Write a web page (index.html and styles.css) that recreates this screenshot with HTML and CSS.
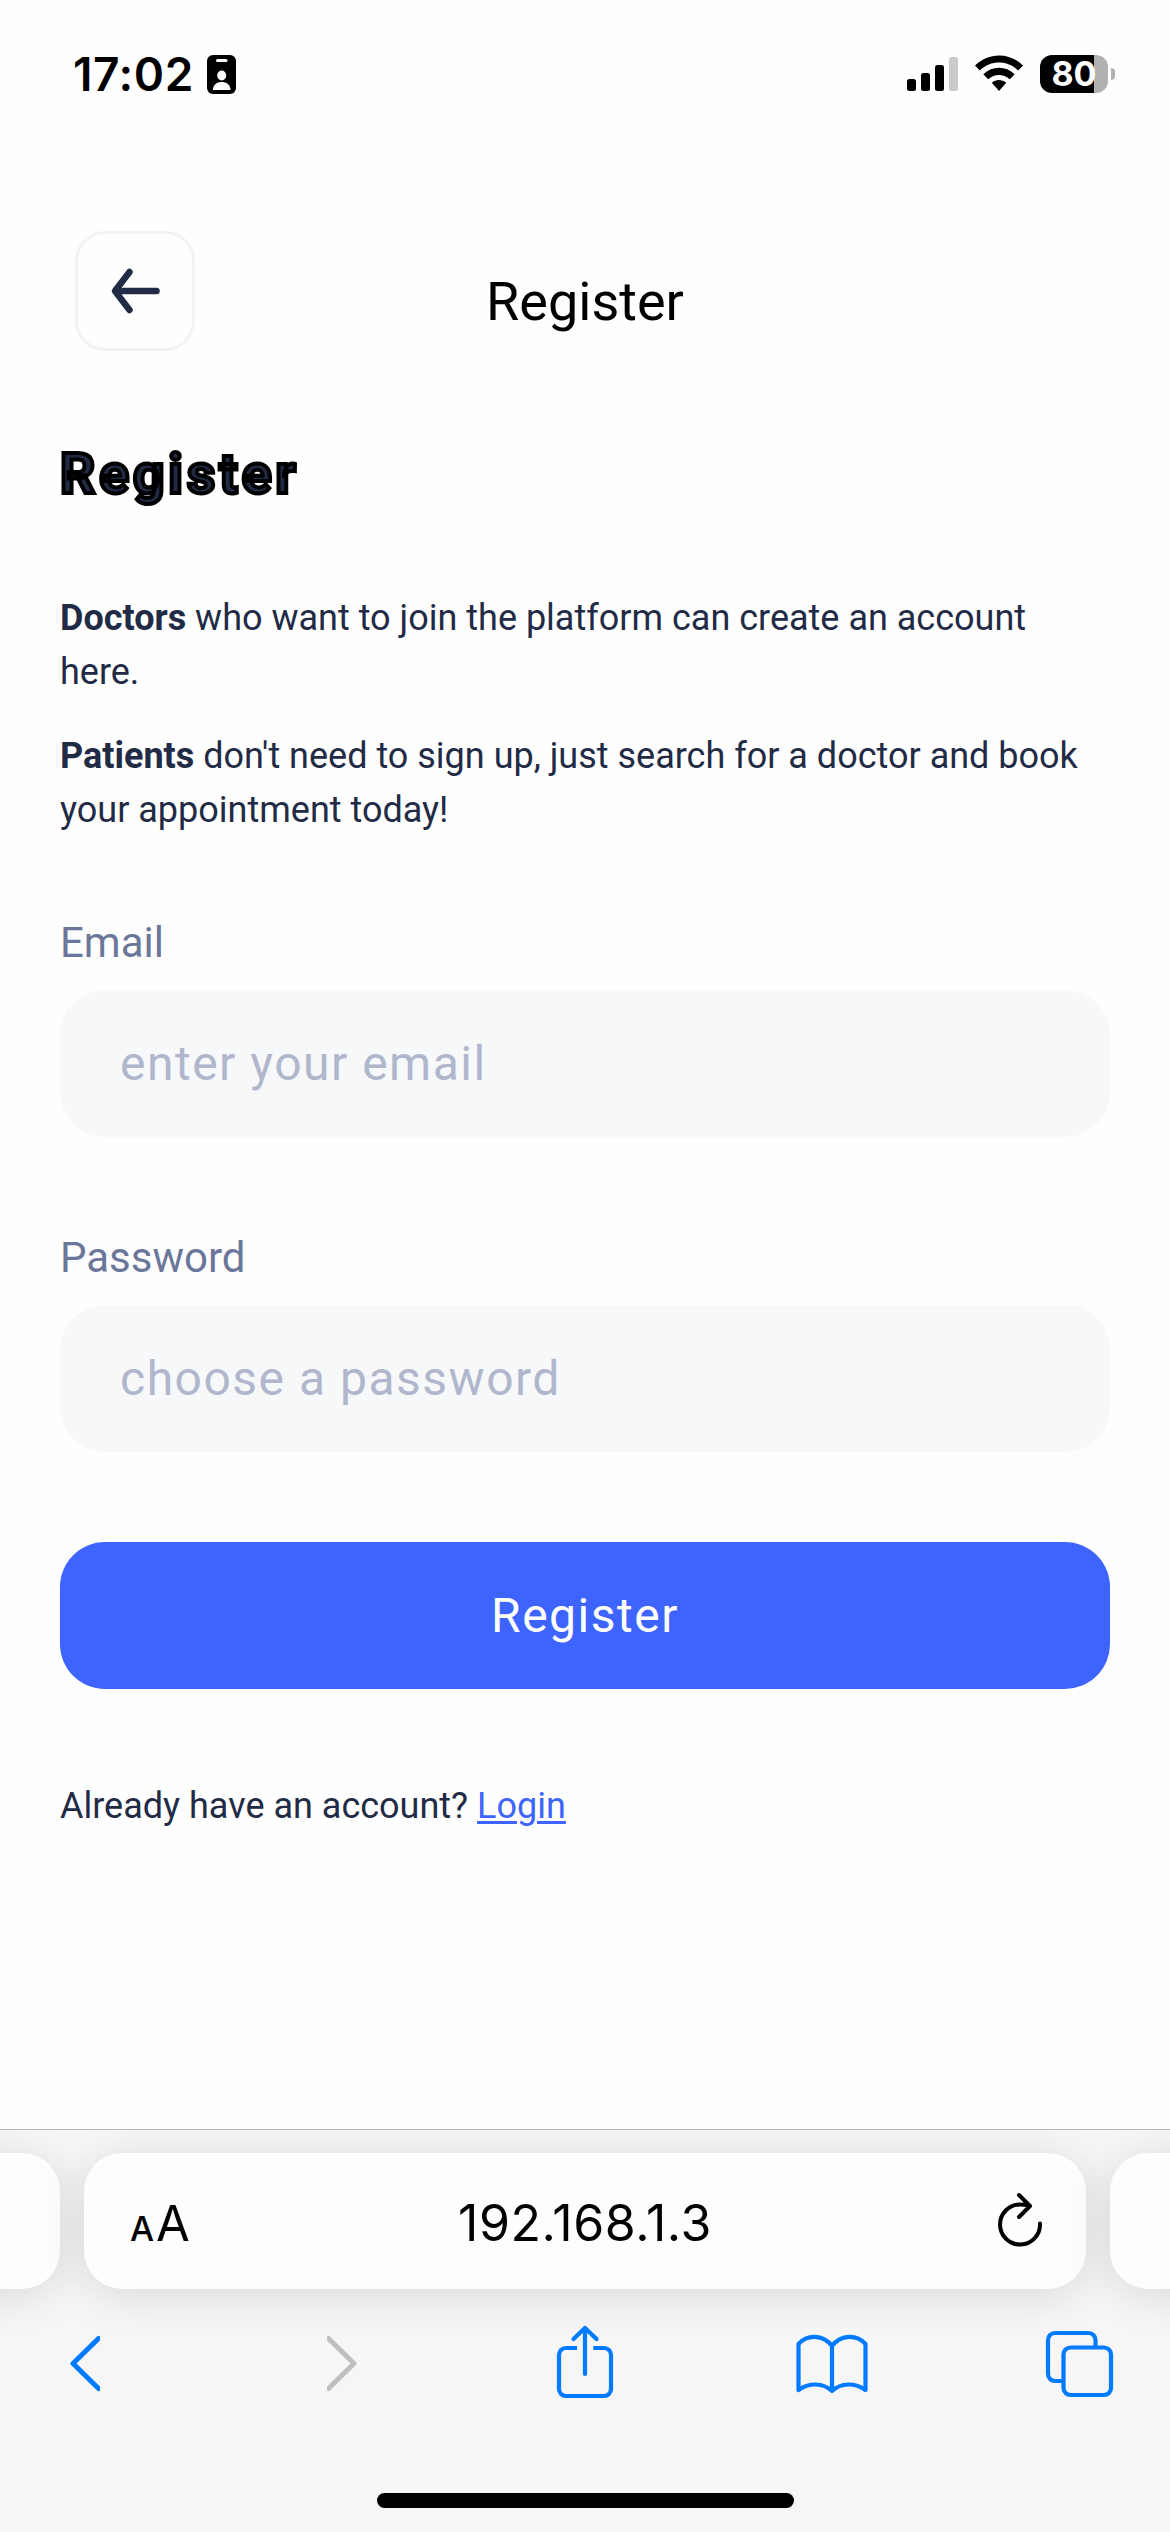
FILE: index.html
```html
<!DOCTYPE html>
<html lang="en">
<head>
<meta charset="utf-8">
<title>Register</title>
<link rel="stylesheet" href="styles.css">
</head>
<body>
<div class="screen">
  <header class="status">
    <span class="time">17:02</span>
    <svg class="badge" width="29" height="39" viewBox="0 0 29 39"><rect width="29" height="39" rx="6"/><rect x="9" y="4" width="11.500" height="3" rx="1.500" fill="#fff"/><ellipse cx="14.700" cy="20.500" rx="4.500" ry="5" fill="#fff"/><path d="M6 35v-1.500c1-4.500 4.500-6.500 8.700-6.500s7.700 2 8.700 6.500V35z" fill="#fff"/></svg>
    <div class="indicators">
      <svg width="51" height="38" viewBox="0 0 51 38"><rect y="24" width="9" height="12" rx="2.500"/><rect x="14" y="18" width="9" height="18" rx="2.500"/><rect x="28" y="10" width="9" height="26" rx="2.500"/><rect x="42" y="2" width="9" height="34" rx="2.500" fill="#cbcbcb"/></svg>
      <svg class="wifi" width="48" height="38" viewBox="0 0 48 38"><path d="M0 10.500C13.500-3 34.500-3 48 10.500l-4.800 5C32.300 4.900 15.700 4.900 4.800 15.500zM8.300 19.200c9-8.600 22.400-8.600 31.400 0l-4.900 5c-6.200-5.700-15.400-5.700-21.600 0zM16.800 27.700c4.200-3.500 10.200-3.500 14.400 0L24 36z"/></svg>
      <div class="battery"><span>80</span></div>
      <i class="nub"></i>
    </div>
  </header>

  <nav class="topbar">
    <button class="back" aria-label="Back"><svg width="60" height="60" viewBox="0 0 60 60"><path d="M24.500 11 10 30l14.500 19M11 30h40.500"/></svg></button>
    <span class="title">Register</span>
  </nav>

  <main class="content">
    <h1>Register</h1>
    <p><b>Doctors</b> who want to join the platform can create an account here.</p>
    <p><b>Patients</b> don't need to sign up, just search for a doctor and book your appointment today!</p>
    <form>
      <label for="email">Email</label>
      <input id="email" type="email" placeholder="enter your email">
      <label for="password">Password</label>
      <input id="password" type="password" placeholder="choose a password">
      <button class="submit" type="button">Register</button>
    </form>
    <p class="login">Already have an account? <a href="#">Login</a></p>
  </main>

  <footer class="browser">
    <div class="tabs">
      <div class="tab"></div>
      <div class="tab address">
        <span class="reader"><small>A</small>A</span>
        <span class="url">192.168.1.3</span>
        <svg class="reload" width="48" height="60" viewBox="0 0 48 60"><path d="M44 32.500A20 20 0 1 1 24 13.500q5 0 9 1.200M23 4l11 11-11 11"/></svg>
      </div>
      <div class="tab"></div>
    </div>
    <div class="tools">
      <svg width="30" height="80" viewBox="0 0 30 80"><path stroke-width="5" d="M28.500 14.500 3 39.500l25.500 25"/></svg>
      <svg class="off" width="30" height="80" viewBox="0 0 30 80"><path stroke-width="5" d="M1.500 14.500 27 39.500l-25.500 25"/></svg>
      <svg width="60" height="80" viewBox="0 0 60 80"><path stroke-linecap="butt" d="M22 24H11A7 7 0 0 0 4 31V65a7 7 0 0 0 7 7H49a7 7 0 0 0 7-7V31a7 7 0 0 0-7-7H38.300"/><path d="M30 50V4.500M18.500 15 30 4l11.500 11"/></svg>
      <svg width="72" height="80" viewBox="0 0 72 80"><path d="M2.500 66V20C11 10.200 27 10 36 22 45 10 61 10.200 69.500 20V66C59 58.500 45 58.500 36 67 27 58.500 13 58.500 2.500 66zM36 22v45"/></svg>
      <svg width="70" height="80" viewBox="0 0 70 80"><path stroke-linecap="butt" d="M17 57H10A7 7 0 0 1 3 50V16a7 7 0 0 1 7-7H43.500a7 7 0 0 1 7 7v7"/><rect x="18.500" y="23.500" width="47.500" height="47.500" rx="7"/></svg>
    </div>
    <div class="home"></div>
  </footer>
</div>
</body>
</html>
```
FILE: styles.css
```css
* { box-sizing: border-box; }
body { margin: 0; background: #fefefe; font-family: Roboto, sans-serif; }
.screen { width: 1170px; height: 2532px; display: flex; flex-direction: column; overflow: hidden; }
svg { display: block; flex: none; }

.status { height: 231px; padding: 44px 55px 0 73px; display: flex; align-items: flex-start; font-family: Inter, sans-serif; }
.time { width: 134px; font-size: 46px; line-height: 60px; font-weight: 600; letter-spacing: .600px; }
.badge { margin-top: 11px; }
.indicators { margin: 11px 0 0 auto; display: flex; }
.wifi { margin: 0 17px; }
.battery { width: 68px; height: 38px; border-radius: 12px; background: linear-gradient(90deg, #000 54px, #b1b1b1 54px); color: #fff; font-size: 34px; line-height: 38px; font-weight: 700; text-align: center; }
.nub { width: 4px; height: 12px; margin: 13px 0 0 3px; border-radius: 0 4px 4px 0; background: #b1b1b1; }

.topbar { height: 120px; padding: 0 75px; display: grid; grid-template-columns: 120px 1fr 120px; }
.back { width: 120px; height: 120px; padding: 0; border: 3px solid #f1f4f7; border-radius: 30px; background: none; display: grid; place-items: center; }
.back svg { fill: none; stroke: #222b45; stroke-width: 6.500; stroke-linecap: round; stroke-linejoin: round; }
.title { padding-top: 36px; font-size: 54px; line-height: 70px; text-align: center; }

.content { padding: 0 60px; color: #222b45; }
h1 { margin: 87px 0 81px; font-size: 55px; line-height: 72px; font-weight: 700; letter-spacing: 4px; -webkit-text-stroke: 4px #000; }
p { margin: 0 0 30px; font-size: 36px; line-height: 54px; }
form { display: flex; flex-direction: column; padding-top: 46px; }
label { font-size: 42px; line-height: 60px; color: #6b779a; margin-bottom: 17px; }
input { height: 147px; margin: 0 0 91px; padding: 0 60px; border: 0; border-radius: 45px; background: #f7f8fa; font: 48px Roboto, sans-serif; letter-spacing: 1.500px; }
#password { margin-bottom: 90px; }
input::placeholder { color: #b0b7cd; opacity: 1; }
.submit { height: 147px; border: 0; border-radius: 45px; background: #3e64ff; color: #fff; font: 48px Roboto, sans-serif; letter-spacing: 1.500px; }
.login { margin-top: 90px; }
a { color: #3e64ff; text-decoration-thickness: 3px; text-underline-offset: 3px; }

.browser { height: 403px; margin-top: auto; border-top: 1px solid #b9b9b9; background: #f6f6f6; display: flex; flex-direction: column; overflow: hidden; }
.tabs { margin: 23px -942px 0; display: grid; grid-template-columns: 1002px 1002px 1002px; gap: 24px; }
.tab { height: 136px; border-radius: 38px; background: #fdfdfd; box-shadow: 0 6px 45px rgba(0, 0, 0, .12); }
.address { display: grid; grid-template-columns: 110px 1fr 110px; align-items: center; font-family: Inter, sans-serif; }
.reader { padding: 10px 0 0 46px; font-size: 49px; line-height: 60px; white-space: nowrap; }
.reader small { font-size: 34px; font-weight: 500; margin-right: 2px; }
.url { padding-top: 4px; font-size: 50px; line-height: 60px; text-align: center; letter-spacing: .600px; }
.reload { margin: 0 0 1px 20px; fill: none; stroke: #000; stroke-width: 4; stroke-linecap: round; stroke-linejoin: round; }
.tools { height: 80px; margin: 35px 0 0 70px; display: grid; grid-template-columns: 257px 228px 241px 249px 70px; }
.tools svg { fill: none; stroke: #007aff; stroke-width: 4.200; stroke-linecap: round; stroke-linejoin: round; }
.tools .off { stroke: #bfbfbf; }
.home { width: 417px; height: 15px; margin: 89px auto 0; border-radius: 8px; background: #000; }
```
